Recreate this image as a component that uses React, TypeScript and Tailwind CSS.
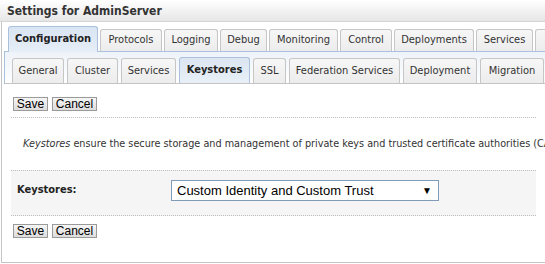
const topTabs = [
  { label: "Configuration", w: "w-[90px]", active: true },
  { label: "Protocols", w: "w-[62px]" },
  { label: "Logging", w: "w-[54px]" },
  { label: "Debug", w: "w-[47px]" },
  { label: "Monitoring", w: "w-[69px]" },
  { label: "Control", w: "w-[52px]" },
  { label: "Deployments", w: "w-[80px]" },
  { label: "Services", w: "w-[57px]" },
  { label: "Security", w: "w-[60px]" },
];

const subTabs = [
  { label: "General", w: "w-[52px]" },
  { label: "Cluster", w: "w-[51px]" },
  { label: "Services", w: "w-[55px]" },
  { label: "Keystores", w: "w-[71px]", active: true },
  { label: "SSL", w: "w-[33px]" },
  { label: "Federation Services", w: "w-[111px]" },
  { label: "Deployment", w: "w-[74px]" },
  { label: "Migration", w: "w-[64px]" },
  { label: "Tuning", w: "w-[52px]" },
];

const Buttons = () => (
  <div className="flex gap-[4px] font-['Liberation_Sans',Arial,sans-serif] text-[12px] text-black">
    <button className="h-[14px] w-[35px] leading-[12px] border border-[#9a9a9a] bg-gradient-to-b from-[#f6f6f6] to-[#dcdcdc]">
      Save
    </button>
    <button className="h-[14px] w-[45px] leading-[12px] border border-[#9a9a9a] bg-gradient-to-b from-[#f6f6f6] to-[#dcdcdc]">
      Cancel
    </button>
  </div>
);

export default function App() {
  return (
    <div className="w-[545px] h-[264px] overflow-hidden bg-white text-[#333] font-['DejaVu_Sans_Condensed','DejaVu_Sans',sans-serif] text-[11px]">
      <div className="h-[22px] px-[7px] flex items-center font-bold text-[12px] bg-gradient-to-b from-white to-[#e6e6e6] border-b border-[#d4d4d4]">
        Settings for AdminServer
      </div>
      <div className="ml-[1px] h-[241px] border-l border-b border-[#c4c4c4]">
        <div className="h-[29px] flex items-end gap-[2px] pl-[6px] whitespace-nowrap">
          {topTabs.map((t) =>
            t.active ? (
              <div
                key={t.label}
                className={`${t.w} h-[26px] -mb-px shrink-0 flex items-center justify-center font-bold text-[#222] rounded-t-[3px] border border-b-0 border-[#a9c1dc] bg-gradient-to-b from-[#d9e5f2] to-[#e6eef7]`}
              >
                {t.label}
              </div>
            ) : (
              <div
                key={t.label}
                className={`${t.w} h-[22px] shrink-0 flex items-center justify-center rounded-t-[3px] border border-b-0 border-[#c6c6c6] bg-gradient-to-b from-[#f7f7f7] to-[#ececec]`}
              >
                {t.label}
              </div>
            )
          )}
        </div>
        <div className="ml-[2px] h-[33px] border-t border-l border-[#a9c1dc] bg-gradient-to-b from-[#eef3f9] to-white">
          <div className="h-[32px] flex items-end gap-[3px] pl-[7px] border-b border-[#c4c4c4] whitespace-nowrap">
            {subTabs.map((t) =>
              t.active ? (
                <div
                  key={t.label}
                  className={`${t.w} h-[26px] shrink-0 flex items-center justify-center font-bold text-[#222] rounded-t-[3px] border border-b-0 border-[#a9c1dc] bg-gradient-to-b from-[#dbe6f2] to-[#e8eff7]`}
                >
                  {t.label}
                </div>
              ) : (
                <div
                  key={t.label}
                  className={`${t.w} h-[25px] shrink-0 flex items-center justify-center rounded-t-[3px] border border-b-0 border-[#c6c6c6] bg-gradient-to-b from-[#f7f7f7] to-[#ececec]`}
                >
                  {t.label}
                </div>
              )
            )}
          </div>
        </div>
        <div className="pt-[13px] pl-[11px]">
          <Buttons />
        </div>
        <div className="mt-[6px] mx-[9px] border-t border-dotted border-[#bdbdbd]" />
        <div className="h-[52px] flex items-center pl-[21px] whitespace-nowrap overflow-hidden text-[10.75px]">
          <span>
            <i>Keystores</i> ensure the secure storage and management of private keys and trusted certificate authorities (CAs).
          </span>
        </div>
        <div className="mx-[9px] h-[46px] border-t border-b border-dotted border-[#bdbdbd] bg-[#f5f5f5] flex items-start pt-[9px]">
          <div className="w-[160px] pl-[6px] pt-[2px] font-bold text-[#222]">Keystores:</div>
          <div className="w-[268px] h-[21px] border border-[#7f9db9] bg-white flex items-center justify-between pl-[5px] pr-[6px] font-['Liberation_Sans',Arial,sans-serif] text-[13px] text-black">
            <span>Custom Identity and Custom Trust</span>
            <span className="text-[10px]">▼</span>
          </div>
        </div>
        <div className="pt-[8px] pl-[11px]">
          <Buttons />
        </div>
      </div>
    </div>
  );
}
